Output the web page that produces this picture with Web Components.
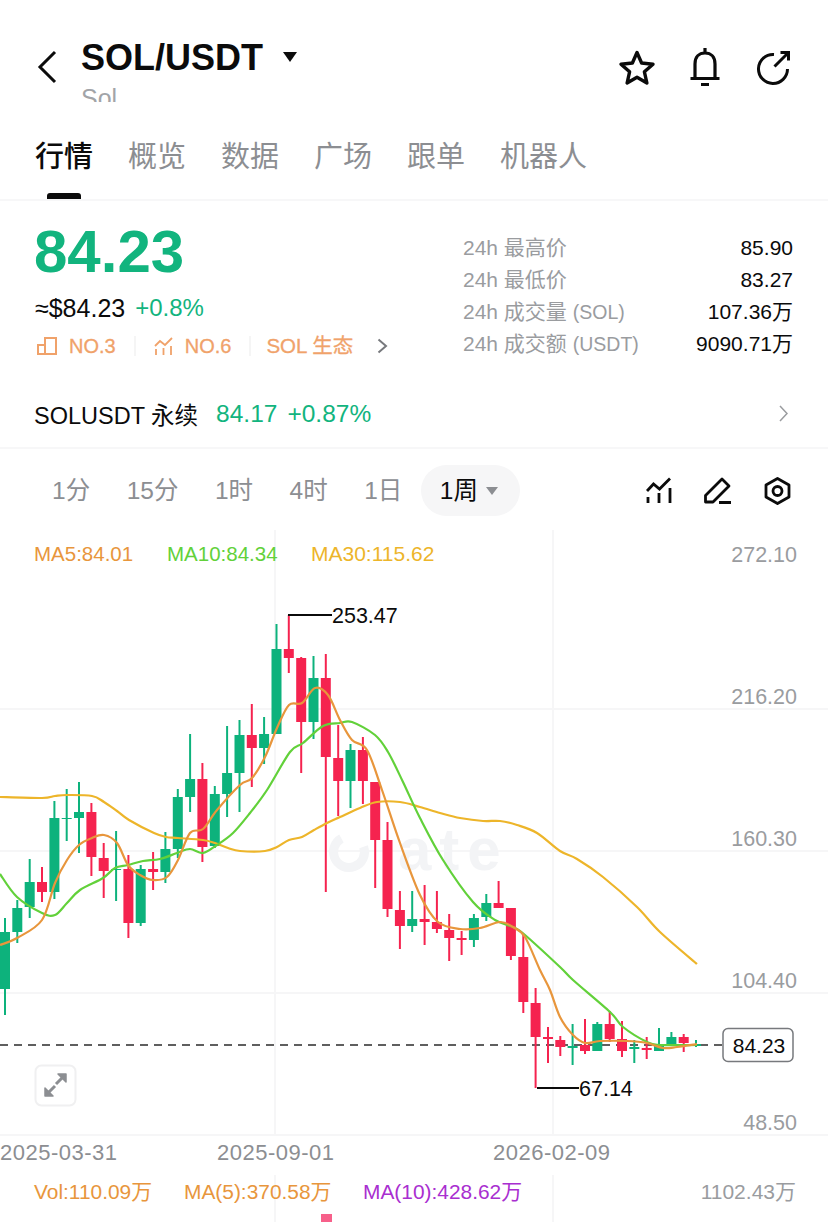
<!DOCTYPE html>
<html lang="zh">
<head>
<meta charset="utf-8">
<title>SOL/USDT</title>
<style>
  html, body { margin: 0; padding: 0; background: #fff; }
  body {
    width: 828px;
    height: 1222px;
    overflow: hidden;
    font-family: "Liberation Sans", "Noto Sans CJK SC", sans-serif;
    color: #0b0b0b;
  }
</style>
</head>
<body>
  <coin-header name="SOL/USDT" sub="Sol"></coin-header>
  <tab-bar>
    <tab-item active>行情</tab-item>
    <tab-item>概览</tab-item>
    <tab-item>数据</tab-item>
    <tab-item>广场</tab-item>
    <tab-item>跟单</tab-item>
    <tab-item>机器人</tab-item>
  </tab-bar>
  <price-panel>
    <stat-row value="85.90">24h 最高价</stat-row>
    <stat-row value="83.27">24h 最低价</stat-row>
    <stat-row value="107.36万">24h 成交量 <span style="font-size:19.5px">(SOL)</span></stat-row>
    <stat-row value="9090.71万">24h 成交额 <span style="font-size:19.5px">(USDT)</span></stat-row>
  </price-panel>
  <perp-row></perp-row>
  <interval-bar>
    <interval-item>1分</interval-item>
    <interval-item>15分</interval-item>
    <interval-item>1时</interval-item>
    <interval-item>4时</interval-item>
    <interval-item>1日</interval-item>
    <interval-item active>1周</interval-item>
  </interval-bar>
  <kline-chart></kline-chart>

<script>
const icons = {
  back: '<svg width="20" height="34" viewBox="0 0 20 34" fill="none" stroke="currentColor" stroke-width="3"><path d="M18 2 3 17l15 15"/></svg>',
  star: '<svg width="38" height="36" viewBox="0 0 38 36" fill="none" stroke="currentColor" stroke-width="3.4" stroke-linejoin="round"><path d="M19 2.500 23.600 13 35 14.200 26.400 21.800 28.900 33 19 27.200 9.100 33 11.600 21.800 3 14.200 14.400 13Z"/></svg>',
  bell: '<svg width="32" height="40" viewBox="0 0 32 40" fill="none" stroke="currentColor" stroke-width="3.2"><path d="M6 31V17C6 10 10 6 16 6s10 4 10 11v14M1.500 31.500h29M16 1v5M12 37.500h8"/></svg>',
  share: '<svg width="33" height="36" viewBox="0 0 33 36" fill="none" stroke="currentColor" stroke-width="3"><path d="M17 5.500A14.500 14.500 0 1 0 30.500 20M17.500 17.500 31 4M23.500 3.500h8v8"/></svg>',
  bars: '<svg width="20" height="18" viewBox="0 0 20 18" fill="none" stroke="currentColor" stroke-width="2"><path d="M1 8h7v9H1zM8 1h11v16H8z"/></svg>',
  trend: '<svg width="19" height="18" viewBox="0 0 19 18" fill="none" stroke="currentColor" stroke-width="1.800"><path d="M1 9 6 4l5 4 7-7M2 12v6M9.500 11v7M17 9v9"/></svg>',
  more: '<svg width="11" height="16" viewBox="0 0 11 16" fill="none" stroke="currentColor" stroke-width="2"><path d="M1.500 1.500 9 8l-7.500 6.500"/></svg>',
  moreThin: '<svg width="9" height="17" viewBox="0 0 9 17" fill="none" stroke="currentColor" stroke-width="1.500"><path d="M1 1 8 8.500 1 16"/></svg>',
  lines: '<svg width="26" height="26" viewBox="0 0 26 26" fill="none" stroke="currentColor" stroke-width="2.800"><path d="M1 14 7.500 7l6 5L24 1.500M2 20v6M13 16v10M24 11v15"/></svg>',
  pen: '<svg width="28" height="27" viewBox="0 0 28 27" fill="none" stroke="currentColor" stroke-width="2.800" stroke-linejoin="round"><path d="M1.500 25v-6.500L18 2l7 7-16 16ZM15 25.500h12"/></svg>',
  hex: '<svg width="27" height="28" viewBox="0 0 27 28" fill="none" stroke="currentColor" stroke-width="2.800" stroke-linejoin="round"><path d="M13.500 1.500 25 8v12l-11.500 6.500L2 20V8Z"/><circle cx="13.500" cy="14" r="4.500"/></svg>'
};

class CoinIcon extends HTMLElement {
  constructor() {
    super();
    this.attachShadow({ mode: 'open' }).innerHTML = `
      <style>:host { display: inline-flex; line-height: 0; } svg { display: block; }</style>
      ${icons[this.getAttribute('name')] || ''}`;
  }
}
customElements.define('coin-icon', CoinIcon);

class CoinHeader extends HTMLElement {
  constructor() {
    super();
    this.attachShadow({ mode: 'open' }).innerHTML = `
      <style>
      :host { display: flex; height: 118px; box-sizing: border-box; padding: 0 38px 0 37px; align-items: flex-start; }
      .back { margin-top: 50px; margin-right: 24px; }
      .title { margin-top: 37px; height: 65px; overflow: hidden; flex: 1; }
      .name { display: flex; align-items: flex-start; font-size: 36px; font-weight: 700; line-height: 42px; }
      .caret { width: 0; height: 0; margin: 15px 0 0 20px; border: 7.500px solid transparent; border-top: 10px solid #0b0b0b; border-bottom: 0; }
      .sub { font-size: 25px; line-height: 24px; margin-top: 7px; color: #a2a4a8; }
      .acts { display: flex; margin-top: 47px; align-items: flex-start; }
      .star { margin-top: 3px; margin-right: 33px; }
      .share { margin-top: 2px; margin-left: 36px; }
      </style>
      <coin-icon class="back" name="back"></coin-icon>
      <div class="title">
        <div class="name"><span>${this.getAttribute('name')}</span><i class="caret"></i></div>
        <div class="sub">${this.getAttribute('sub')}</div>
      </div>
      <div class="acts">
        <coin-icon class="star" name="star"></coin-icon>
        <coin-icon name="bell"></coin-icon>
        <coin-icon class="share" name="share"></coin-icon>
      </div>`;
  }
}
customElements.define('coin-header', CoinHeader);

class TabBar extends HTMLElement {
  constructor() {
    super();
    this.attachShadow({ mode: 'open' }).innerHTML = `
      <style>
      :host { display: flex; gap: 35px; height: 83px; box-sizing: border-box; padding-left: 35px; border-bottom: 2px solid #f7f7f8; }
      </style>
      <slot></slot>`;
  }
}
customElements.define('tab-bar', TabBar);

class TabItem extends HTMLElement {
  constructor() {
    super();
    this.attachShadow({ mode: 'open' }).innerHTML = `
      <style>
      :host { display: block; position: relative; font-size: 29px; line-height: 40px; padding-top: 19px; color: #8c8e92; }
      :host([active]) { color: #0b0b0b; font-weight: 500; }
      :host([active])::after { content: ""; position: absolute; left: 12px; width: 34px; height: 6px; top: 75px; border-radius: 3px 3px 0 0; background: #0b0b0b; }
      </style>
      <slot></slot>`;
  }
}
customElements.define('tab-item', TabItem);

class StatRow extends HTMLElement {
  constructor() {
    super();
    this.attachShadow({ mode: 'open' }).innerHTML = `
      <style>
      :host { display: flex; justify-content: space-between; height: 32px; line-height: 32px; font-size: 21px; }
      .label { color: #9a9c9f; }
      .value { color: #0b0b0b; }
      </style>
      <span class="label"><slot></slot></span>
      <span class="value">${this.getAttribute('value')}</span>`;
  }
}
customElements.define('stat-row', StatRow);

class PricePanel extends HTMLElement {
  constructor() {
    super();
    this.attachShadow({ mode: 'open' }).innerHTML = `
      <style>
      :host { display: flex; height: 179px; box-sizing: border-box; padding: 0 35px; justify-content: space-between; }
      .left { display: flex; flex-direction: column; padding-top: 18px; }
      .price { font-size: 60px; font-weight: 700; line-height: 66px; color: #12b47e; margin-left: -1px; }
      .fiat { display: flex; gap: 10px; font-size: 24px; line-height: 30px; margin-top: 8px; }
      .fiat span { font-size: 25px; }
      .fiat b { font-weight: 400; color: #12b47e; }
      .tags { display: flex; align-items: center; font-size: 20px; line-height: 24px; color: #f0a26a; margin-top: 11px; height: 24px; -webkit-text-stroke: .3px #f0a26a; }
      .tags coin-icon { margin-left: 2px; margin-right: 12px; }
      .tags .trend { margin-left: 0; margin-right: 12px; }
      .sep { width: 2px; height: 20px; background: #f5f5f5; margin: 0 18px; }
      .sep.short { margin-right: 15px; }
      .eco { font-size: 20.500px; }
      .tags .go { color: #77797d; margin: 0 0 0 24px; }
      .right { width: 330px; padding-top: 31px; }
      </style>
      <div class="left">
        <div class="price">84.23</div>
        <div class="fiat"><span>≈$84.23</span><b>+0.8%</b></div>
        <div class="tags">
          <coin-icon name="bars"></coin-icon><span>NO.3</span><i class="sep"></i>
          <coin-icon class="trend" name="trend"></coin-icon><span>NO.6</span><i class="sep short"></i>
          <span class="eco">SOL 生态</span><coin-icon class="go" name="more"></coin-icon>
        </div>
      </div>
      <div class="right"><slot></slot></div>`;
  }
}
customElements.define('price-panel', PricePanel);

class PerpRow extends HTMLElement {
  constructor() {
    super();
    this.attachShadow({ mode: 'open' }).innerHTML = `
      <style>
      :host { display: flex; align-items: center; height: 69px; box-sizing: border-box; padding: 0 40px 0 34px; border-bottom: 2px solid #f7f7f8; font-size: 23.500px; }
      .num { color: #12b47e; font-size: 24.500px; margin-left: 10px; }
      .first { margin-left: 18px; }
      coin-icon { margin-left: auto; color: #9a9c9f; }
      </style>
      <span>SOLUSDT 永续</span>
      <span class="num first">84.17</span>
      <span class="num">+0.87%</span>
      <coin-icon name="moreThin"></coin-icon>`;
  }
}
customElements.define('perp-row', PerpRow);

class IntervalBar extends HTMLElement {
  constructor() {
    super();
    this.attachShadow({ mode: 'open' }).innerHTML = `
      <style>
      :host { display: flex; align-items: center; height: 81px; box-sizing: border-box; padding: 2px 37px 0 52px; }
      .items { display: flex; align-items: center; gap: 36.500px; }
      .acts { display: flex; gap: 32px; margin-left: auto; color: #0b0b0b; }
      </style>
      <div class="items"><slot></slot></div>
      <div class="acts">
        <coin-icon name="lines"></coin-icon>
        <coin-icon name="pen"></coin-icon>
        <coin-icon name="hex"></coin-icon>
      </div>`;
  }
}
customElements.define('interval-bar', IntervalBar);

class IntervalItem extends HTMLElement {
  constructor() {
    super();
    this.attachShadow({ mode: 'open' }).innerHTML = `
      <style>
      :host { display: flex; align-items: center; font-size: 24.500px; line-height: 30px; color: #8c8e92; }
      :host([active]) { color: #0b0b0b; background: #f6f6f7; height: 51px; width: 99px; box-sizing: border-box; padding-left: 19px; border-radius: 26px; margin-left: -18px; }
      .caret { display: none; width: 0; height: 0; margin-left: 8px; border: 6px solid transparent; border-top: 8px solid #8c8e92; border-bottom: 0; }
      :host([active]) .caret { display: block; }
      </style>
      <slot></slot><i class="caret"></i>`;
  }
}
customElements.define('interval-item', IntervalItem);

// [up, bodyTop, bodyBottom, wickTop, wickBottom], read off in page pixels
const candles = [
  [1,932,989,918,1015],[1,908,932,900,943],[1,882,907,859,918],[0,882,892,867,902],
  [1,818,892,801,899],[1,818,819,789,841],[1,812,818,782,853],[0,812,857,803,876],
  [0,858,871,843,898],[1,869,870,831,901],[0,869,923,855,938],[1,869,923,865,926],
  [0,869,872,852,890],[1,849,872,832,883],[1,797,849,789,858],[1,779,797,734,812],
  [0,779,847,763,862],[1,794,846,786,848],[1,773,794,726,817],[1,735,773,720,812],
  [0,735,748,704,787],[1,734,748,717,764],[1,649,734,624,734],[0,649,658,615,673],
  [0,658,722,657,773],[1,678,722,656,739],[0,678,757,654,892],[0,758,781,725,816],
  [1,750,781,744,808],[0,750,781,737,804],[0,782,840,782,888],[0,840,909,822,917],
  [0,910,926,891,949],[1,919,926,891,932],[0,919,922,885,945],[0,922,929,891,933],
  [0,930,938,914,961],[0,938,940,931,955],[1,918,940,914,947],[1,903,917,894,921],
  [0,903,908,881,908],[0,908,956,908,960],[0,957,1002,935,1013],[0,1003,1037,988,1088],
  [0,1037,1039,1027,1063],[0,1040,1047,1036,1056],[1,1046,1048,1024,1065],[0,1045,1051,1019,1054],
  [1,1024,1051,1022,1051],[0,1024,1039,1011,1042],[0,1039,1051,1021,1057],[1,1047,1049,1040,1063],
  [0,1048,1050,1037,1059],[1,1046,1051,1028,1051],[1,1037,1046,1032,1046],[0,1037,1043,1034,1052],
  [1,1044,1046,1040,1047]
];

const ma5 = [[0,945],[17,938],[42,920],[55,883],[67,860],[79,845],[92,838],[104,835],[117,843],[128,865],[140,875],[153,880],[167,877],[178,860],[190,833],[203,829],[217,810],[240,785],[252,778],[265,757],[277,728],[289,705],[302,703],[315,688],[328,695],[340,720],[352,740],[367,750],[382,790],[400,843],[420,895],[438,922],[460,929],[480,928],[500,922],[513,927],[525,937],[540,970],[550,990],[560,1017],[573,1035],[585,1043],[600,1041],[627,1041],[647,1043],[663,1048],[677,1047],[697,1044]];
const ma10 = [[0,874],[17,897],[42,913],[55,915],[67,903],[80,890],[103,878],[115,868],[128,865],[143,861],[160,859],[177,853],[190,849],[203,853],[217,845],[233,833],[250,813],[267,790],[290,752],[303,743],[323,726],[340,723],[352,722],[375,735],[388,752],[403,782],[420,818],[443,860],[473,902],[495,920],[513,927],[525,935],[560,967],[573,980],[610,1012],[623,1027],[647,1042],[660,1045],[697,1045]];
const ma30 = [[0,797],[42,798],[55,796],[67,795],[92,796],[104,802],[117,811],[129,820],[154,833],[166,837],[178,838],[203,840],[215,843],[228,848],[240,851],[265,851],[277,847],[289,840],[302,837],[314,830],[327,823],[340,817],[360,808],[377,802],[400,802],[420,807],[440,813],[460,818],[483,821],[500,821],[517,825],[537,833],[560,851],[577,859],[603,877],[637,907],[660,932],[697,964]];

// smooth a point list with a catmull-rom curve
function smoothPath(pts) {
  let d = `M${pts[0][0]} ${pts[0][1]}`;
  for (let i = 0; i < pts.length - 1; i++) {
    const p0 = pts[i - 1] || pts[i], p1 = pts[i], p2 = pts[i + 1], p3 = pts[i + 2] || p2;
    const c1 = [p1[0] + (p2[0] - p0[0]) / 6, p1[1] + (p2[1] - p0[1]) / 6];
    const c2 = [p2[0] - (p3[0] - p1[0]) / 6, p2[1] - (p3[1] - p1[1]) / 6];
    d += `C${c1[0].toFixed(1)} ${c1[1].toFixed(1)} ${c2[0].toFixed(1)} ${c2[1].toFixed(1)} ${p2[0]} ${p2[1]}`;
  }
  return d;
}

class KlineChart extends HTMLElement {
  constructor() {
    super();
    const sticks = candles.map((c, i) => {
      const x = 5 + 12.34 * i;
      const color = c[0] ? '#0db27c' : '#f5234f';
      return `<path d="M${x.toFixed(1)} ${c[3]}V${c[4]}" stroke="${color}" stroke-width="2"/>` +
        `<rect x="${(x - 5).toFixed(1)}" y="${c[1]}" width="10" height="${c[2] - c[1]}" fill="${color}"/>`;
    }).join('');
    const grid = [709, 851, 993, 1135].map(y => `<path d="M0 ${y}H828"/>`).join('');
    const axis = [['272.10', 562], ['216.20', 704], ['160.30', 846], ['104.40', 988], ['48.50', 1130]]
      .map(a => `<text class="axis" x="797" y="${a[1]}" text-anchor="end">${a[0]}</text>`).join('');
    const dates = [['2025-03-31', 0], ['2025-09-01', 217], ['2026-02-09', 493]]
      .map(d => `<text class="date" x="${d[1]}" y="1160">${d[0]}</text>`).join('');
    this.attachShadow({ mode: 'open' }).innerHTML = `
      <style>
      :host { display: block; height: 692px; }
      svg { display: block; }
      text { font-family: "Liberation Sans", "Noto Sans CJK SC", sans-serif; }
      .legend { font-size: 20.500px; }
      .vol { font-size: 20.900px; }
      .axis { font-size: 21.500px; fill: #9a9c9f; }
      .date { font-size: 22px; fill: #8c8e92; letter-spacing: .5px; }
      .mark { font-size: 21.500px; fill: #0b0b0b; }
      .brand { font-size: 60px; font-weight: 700; fill: #f3f4f6; letter-spacing: 8px; }
      </style>
      <svg width="828" height="692" viewBox="0 530 828 692" fill="none">
        <g stroke="#f6f6f7" stroke-width="2">
          ${grid}
          <path d="M275 530V1135M553 530V1135M275 1175V1222M553 1175V1222"/>
        </g>
        <circle cx="349" cy="852" r="15.500" stroke="#f3f4f6" stroke-width="9" stroke-dasharray="70 28" transform="rotate(-20 349 852)"/>
        <text class="brand" x="398" y="870">ate</text>
        <path d="M0 1045H723" stroke="#2b2b2b" stroke-width="1.500" stroke-dasharray="8 6"/>
        ${sticks}
        <path d="${smoothPath(ma30)}" stroke="#edb52a" stroke-width="2.200"/>
        <path d="${smoothPath(ma10)}" stroke="#62d13a" stroke-width="2.200"/>
        <path d="${smoothPath(ma5)}" stroke="#e8963c" stroke-width="2.200"/>
        <path d="M288 615H332M537 1088H579" stroke="#0b0b0b" stroke-width="2"/>
        <text class="mark" x="332" y="623">253.47</text>
        <text class="mark" x="579" y="1096">67.14</text>
        <text class="legend" x="34" y="561" fill="#e8963c">MA5:84.01</text>
        <text class="legend" x="167" y="561" fill="#62d13a">MA10:84.34</text>
        <text class="legend" x="311" y="561" fill="#edb52a" style="font-size:21px">MA30:115.62</text>
        ${axis}
        <rect x="723" y="1028.500" width="70" height="33" rx="5" fill="#fff" stroke="#77797d" stroke-width="1.500"/>
        <text class="mark" x="759" y="1052.500" text-anchor="middle" style="font-size:21px">84.23</text>
        <rect x="35.500" y="1065.500" width="40" height="40" rx="6" fill="#fff" stroke="#f0f0f1" stroke-width="2"/>
        <path d="M58 1074h8v8ZM45 1096v-8l8 8Z" fill="#8c8e92" stroke="#8c8e92" stroke-width="1.500" stroke-linejoin="round"/>
        <path d="M62 1078l-6 6M49 1092l6-6" stroke="#8c8e92" stroke-width="3"/>
        ${dates}
        <text class="vol" x="34" y="1199" fill="#e8963c">Vol:110.09万</text>
        <text class="vol" x="184" y="1199" fill="#e8963c">MA(5):370.58万</text>
        <text class="vol" x="363" y="1199" fill="#a92fd0">MA(10):428.62万</text>
        <text class="axis" x="796" y="1199" text-anchor="end" style="font-size:21px">1102.43万</text>
        <rect x="321" y="1214" width="11" height="8" fill="#f7608a"/>
      </svg>`;
  }
}
customElements.define('kline-chart', KlineChart);
</script>
</body>
</html>
